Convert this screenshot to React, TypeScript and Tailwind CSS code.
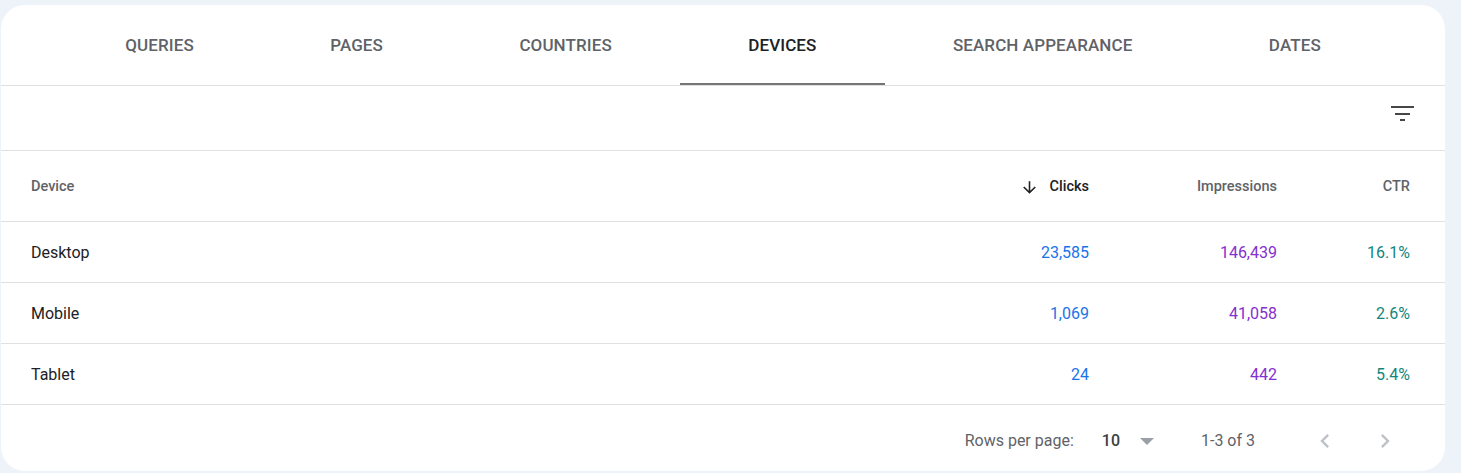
import React from "react";

const tabs = ["QUERIES", "PAGES", "COUNTRIES", "DEVICES", "SEARCH APPEARANCE", "DATES"];

const rows = [
  { d: "Desktop", c: "23,585", i: "146,439", t: "16.1%" },
  { d: "Mobile", c: "1,069", i: "41,058", t: "2.6%" },
  { d: "Tablet", c: "24", i: "442", t: "5.4%" },
];

export default function App() {
  return (
    <div
      className="min-h-screen bg-[#eef2f9] pt-[5px] pl-[1px]"
      style={{ fontFamily: "Roboto, 'Noto Sans', Arial, sans-serif" }}
    >
      <div className="w-[1444px] h-[466px] bg-white rounded-[24px] overflow-hidden flex flex-col">
        {/* Tabs */}
        <div className="h-[81px] border-b border-[#e0e0e0] px-[56px] flex shrink-0">
          {tabs.map((t) => {
            const active = t === "DEVICES";
            return (
              <div
                key={t}
                className={
                  "flex-auto relative flex items-center justify-center text-[17px] font-medium tracking-[0.1px] " +
                  (active ? "text-[#202124]" : "text-[#5f6368]")
                }
              >
                <span className="pt-[1px]">{t}</span>
                {active && <div className="absolute left-0 right-0 bottom-0 h-[2px] bg-[#757575]" />}
              </div>
            );
          })}
        </div>

        {/* Toolbar */}
        <div className="h-[65px] border-b border-[#e0e0e0] flex justify-end items-start pt-[20px] pr-[31px] shrink-0">
          <svg width="23" height="15" viewBox="0 0 23 15" className="text-[#444746]">
            <rect x="0" y="0" width="23" height="2" fill="currentColor" />
            <rect x="4" y="7" width="15" height="2" fill="currentColor" />
            <rect x="9" y="13" width="5" height="2" fill="currentColor" />
          </svg>
        </div>

        {/* Header */}
        <div className="h-[71px] border-b border-[#e0e0e0] flex items-center pt-[2px] pl-[30px] pr-[35px] text-[14.5px] font-medium text-[#5f6368] shrink-0">
          <div className="flex-1">Device</div>
          <div className="w-[160px] flex items-center justify-end gap-[11px] text-[#202124]">
            <svg width="19" height="19" viewBox="0 0 24 24" fill="currentColor">
              <path d="M20 12l-1.41-1.41L13 16.17V4h-2v12.17l-5.58-5.59L4 12l8 8 8-8z" />
            </svg>
            <span>Clicks</span>
          </div>
          <div className="w-[188px] text-right">Impressions</div>
          <div className="w-[133px] text-right">CTR</div>
        </div>

        {/* Rows */}
        {rows.map((r) => (
          <div
            key={r.d}
            className="h-[61px] border-b border-[#e0e0e0] flex items-center pt-[2px] pl-[30px] pr-[35px] text-[16px] shrink-0"
          >
            <div className="flex-1 text-[#202124]">{r.d}</div>
            <div className="w-[160px] text-right text-[#1a73e8]">{r.c}</div>
            <div className="w-[188px] text-right text-[#8430ce]">{r.i}</div>
            <div className="w-[133px] text-right text-[#12867c]">{r.t}</div>
          </div>
        ))}

        {/* Footer */}
        <div className="flex-1 flex items-center justify-end pr-[46px] text-[16px] text-[#5f6368] pt-[6px]">
          <span>Rows per page:</span>
          <span className="ml-[28px] text-[#3c4043] font-medium">10</span>
          <svg width="14" height="7" viewBox="0 0 14 7" className="ml-[20px] text-[#9aa0a6]">
            <path d="M0 0h14L7 7z" fill="currentColor" />
          </svg>
          <span className="ml-[47px]">1-3 of 3</span>
          <div className="ml-[56px] w-[28px] h-[28px] flex items-center justify-center text-[#bdc1c6]">
            <svg width="28" height="28" viewBox="0 0 24 24" fill="currentColor">
              <path d="M15.41 7.41L14 6l-6 6 6 6 1.41-1.41L10.83 12z" />
            </svg>
          </div>
          <div className="ml-[32px] w-[28px] h-[28px] flex items-center justify-center text-[#bdc1c6]">
            <svg width="28" height="28" viewBox="0 0 24 24" fill="currentColor">
              <path d="M8.59 16.59L10 18l6-6-6-6-1.41 1.41L13.17 12z" />
            </svg>
          </div>
        </div>
      </div>
    </div>
  );
}
